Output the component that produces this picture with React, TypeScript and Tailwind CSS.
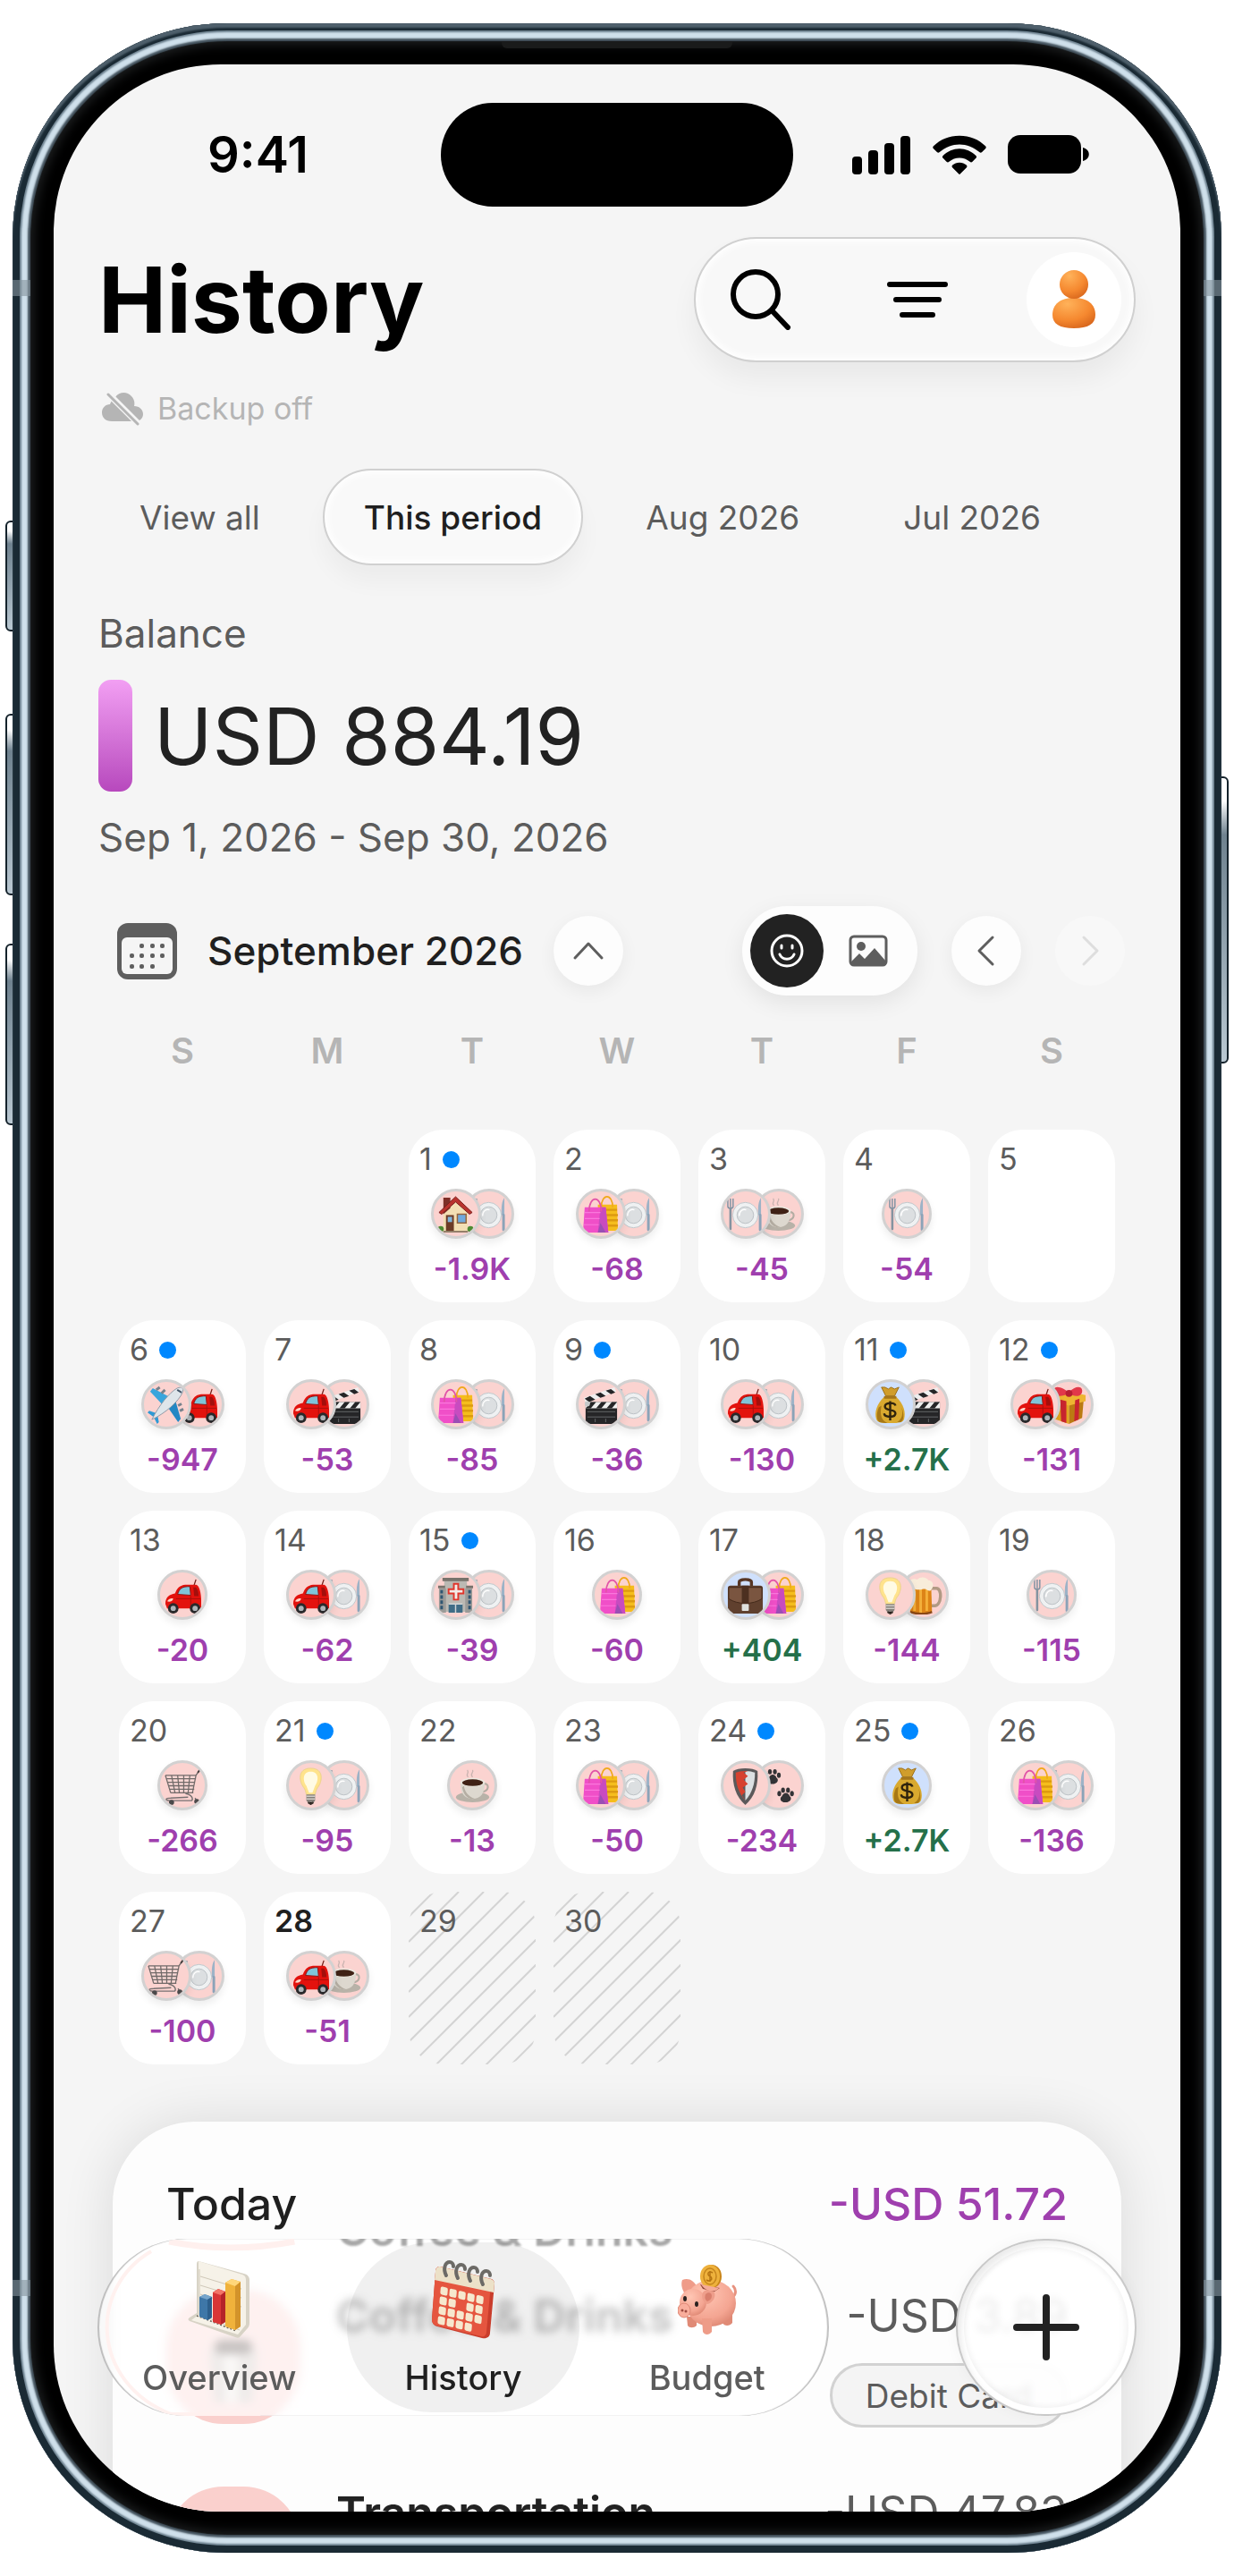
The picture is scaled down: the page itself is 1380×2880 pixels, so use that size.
import { useState } from "react";
import type { ReactNode } from "react";
import clsx from "clsx";

/* =======================
   Types
======================= */

type Category =
  | "home"
  | "shopping"
  | "food"
  | "coffee"
  | "travel"
  | "car"
  | "movies"
  | "salary"
  | "gift"
  | "health"
  | "work"
  | "utilities"
  | "beer"
  | "groceries"
  | "insurance"
  | "pets";

type Day = {
  day: number;
  amount?: string;
  icons?: Category[];
  marked?: boolean;
  today?: boolean;
  future?: boolean;
};

/* =======================
   Data
======================= */

const PERIODS = ["View all", "This period", "Aug 2026", "Jul 2026"];

const WEEKDAYS = ["S", "M", "T", "W", "T", "F", "S"];

const DAYS: Day[] = [
  { day: 1, amount: "-1.9K", icons: ["home", "food"], marked: true },
  { day: 2, amount: "-68", icons: ["shopping", "food"] },
  { day: 3, amount: "-45", icons: ["food", "coffee"] },
  { day: 4, amount: "-54", icons: ["food"] },
  { day: 5 },
  { day: 6, amount: "-947", icons: ["travel", "car"], marked: true },
  { day: 7, amount: "-53", icons: ["car", "movies"] },
  { day: 8, amount: "-85", icons: ["shopping", "food"] },
  { day: 9, amount: "-36", icons: ["movies", "food"], marked: true },
  { day: 10, amount: "-130", icons: ["car", "food"] },
  { day: 11, amount: "+2.7K", icons: ["salary", "movies"], marked: true },
  { day: 12, amount: "-131", icons: ["car", "gift"], marked: true },
  { day: 13, amount: "-20", icons: ["car"] },
  { day: 14, amount: "-62", icons: ["car", "food"] },
  { day: 15, amount: "-39", icons: ["health", "food"], marked: true },
  { day: 16, amount: "-60", icons: ["shopping"] },
  { day: 17, amount: "+404", icons: ["work", "shopping"] },
  { day: 18, amount: "-144", icons: ["utilities", "beer"] },
  { day: 19, amount: "-115", icons: ["food"] },
  { day: 20, amount: "-266", icons: ["groceries"] },
  { day: 21, amount: "-95", icons: ["utilities", "food"], marked: true },
  { day: 22, amount: "-13", icons: ["coffee"] },
  { day: 23, amount: "-50", icons: ["shopping", "food"] },
  { day: 24, amount: "-234", icons: ["insurance", "pets"], marked: true },
  { day: 25, amount: "+2.7K", icons: ["salary"], marked: true },
  { day: 26, amount: "-136", icons: ["shopping", "food"] },
  { day: 27, amount: "-100", icons: ["groceries", "food"] },
  { day: 28, amount: "-51", icons: ["car", "coffee"], today: true },
  { day: 29, future: true },
  { day: 30, future: true },
];

const INCOME: Category[] = ["salary", "work"];

/* =======================
   Category drawings (44 x 44)
======================= */

const paw = (
  <g fill="#333336">
    <path d="M0 8C-6 8-7 3-4 1-2-4 3-4 5 1 8 3 6 8 0 8Z" />
    <ellipse cx="-7" cy="-2" rx="2.200" ry="3" />
    <ellipse cx="-2.700" cy="-6" rx="2.200" ry="3" />
    <ellipse cx="3" cy="-6" rx="2.200" ry="3" />
    <ellipse cx="7.500" cy="-2" rx="2.200" ry="3" />
  </g>
);

const ART: Record<Category, ReactNode> = {
  home: (
    <>
      <path d="M8 20 22 7l14 13v22H8Z" fill="#f3dfb4" />
      <path d="M8 3h8v12l-8 7Z" fill="#7d2f28" />
      <path d="M3 20 22 2l19 18-3 2L22 8 6 22Z" fill="#b9332e" stroke="#7a1f1c" strokeWidth="1" />
      <rect x="11" y="23" width="9" height="19" fill="#6d3b26" />
      <rect x="13" y="25" width="5" height="6" fill="#7fb5dc" />
      <rect x="24" y="22" width="10" height="10" fill="#6fa9dd" stroke="#93633d" strokeWidth="1.500" />
      <path d="M8 42h28" stroke="#94806a" strokeWidth="2" />
      <circle cx="5" cy="39" r="3.500" fill="#4d8b32" />
      <circle cx="39" cy="39" r="3.500" fill="#4d8b32" />
    </>
  ),
  shopping: (
    <>
      <path d="M19 11h22l1 30H20Z" fill="#f5bd1c" />
      <path d="M22 17h19M22 23h20M22 29h20M22 35h20" stroke="#dd9a10" strokeWidth="2.500" />
      <path d="M23 14c0-16 13-16 13 0" fill="none" stroke="#f0a91c" strokeWidth="1.800" />
      <path d="M4 14h24l3 29H2Z" fill="#f04fc8" />
      <path d="M22 14h6l3 29H19Z" fill="#c84bc0" />
      <path d="m22 32 6 11h-9Z" fill="#9a4fb4" />
      <path d="M9 19c0-19 14-19 14 0" fill="none" stroke="#e254a8" strokeWidth="1.800" />
      <path d="M4 20h18M4 27h17M3 34h17" stroke="#f977dc" strokeWidth="1.200" />
    </>
  ),
  food: (
    <>
      <circle cx="22" cy="23" r="14.500" fill="#eff1f2" stroke="#c0c7cb" strokeWidth="1" />
      <circle cx="22" cy="23" r="9.500" fill="#dcdfe1" stroke="#bbc1c5" strokeWidth="1" />
      <path d="M15 24c0-6 4-8 8-7" fill="none" stroke="#fff" strokeWidth="1.500" />
      <path d="M2 4v9c0 3 6 3 6 0V4M5 4v10" fill="none" stroke="#7f92a3" strokeWidth="1.500" />
      <path d="M5 15v24" stroke="#8493a0" strokeWidth="2.600" strokeLinecap="round" />
      <path d="M40 3c-3 4-4 12-3 20l3 1Z" fill="#9db3c7" />
      <path d="M39 23v17" stroke="#8ba3b8" strokeWidth="3" strokeLinecap="round" />
    </>
  ),
  coffee: (
    <>
      <ellipse cx="22" cy="35" rx="19" ry="6" fill="#b8b2a8" />
      <path d="M33 20c9-3 9 10-2 9" fill="none" stroke="#b4ada3" strokeWidth="2.200" />
      <path d="M8 18h28c0 12-4 19-14 19S8 30 8 18Z" fill="#ddd8cf" />
      <path d="M10 24c2 8 5 12 11 13h4C16 34 13 28 12 22Z" fill="#b5aea3" />
      <ellipse cx="22" cy="18" rx="14" ry="5" fill="#ece8e0" />
      <ellipse cx="22" cy="18.500" rx="12" ry="3.800" fill="#3f2115" />
      <path d="M17 12c-4-3 2-4-1-8m6 8c-4-4 2-5 0-8" fill="none" stroke="#c9b3b0" strokeWidth="1.300" />
    </>
  ),
  travel: (
    <>
      <path d="M21 25 4 7l3-4 23 12Z" fill="#39a5dc" />
      <path d="m23 23 13 19 3-4-7-24Z" fill="#2387c4" />
      <path d="m12 32-9-3-2 2 7 5 4 8 2-2Z" fill="#2d9ad5" />
      <path d="M11 5l4-3M17 9l4-4M38 29l4-2M36 23l4-2" stroke="#77828d" strokeWidth="3" />
      <path d="M6 39C14 23 26 8 35 3c5-2 8 0 6 5-4 10-20 24-35 31Z" fill="#dfe5ea" stroke="#8e9ba7" strokeWidth="1" />
      <path d="m35 5 5 3" stroke="#43566a" strokeWidth="2" />
    </>
  ),
  car: (
    <>
      <path d="m34 13 3-9" stroke="#762019" strokeWidth="1.300" />
      <path d="M2 32c0-8 5-11 11-12 3-8 7-10 14-10h10c4 0 6 11 6 18v9H4Z" fill="#e3120d" />
      <path d="M16 21c2-7 5-9 14-9l1 10Z" fill="#7fc4d8" stroke="#8c1512" strokeWidth="1" />
      <path d="M34 13h3c2 2 3 6 3 10h-5Z" fill="#a30f0c" />
      <path d="M14 26h28M31 23v12" stroke="#a90f0c" strokeWidth="1" />
      <path d="M4 29c2-3 5-4 7-3-1 3-4 4-7 3Z" fill="#ffd6c8" />
      <circle cx="11" cy="37" r="6" fill="#29292b" />
      <circle cx="11" cy="37" r="3" fill="#aeb4b8" />
      <circle cx="36" cy="37" r="6" fill="#29292b" />
      <circle cx="36" cy="37" r="3" fill="#aeb4b8" />
    </>
  ),
  movies: (
    <>
      <path d="M5 19h36v22c0 2-1 3-3 3H8c-2 0-3-1-3-3Z" fill="#252527" />
      <path d="M7 30h32M7 36h32M16 38v4M28 38v4" stroke="#66686a" strokeWidth="1" />
      <path d="M5 26V19h36v7Z" fill="#efefef" />
      <path d="m5 26 6-7h6l-6 7Zm12 0 6-7h6l-6 7Zm12 0 6-7h6l-6 7Z" fill="#252527" />
      <path d="M3 14 38 2l2 5L5 20Z" fill="#efefef" />
      <path d="m4 15 6-3 6 4-7 3Zm12-5 6-2 6 4-6 2Zm12-4 6-2 5 4-5 2Z" fill="#252527" />
      <circle cx="7" cy="21" r="3" fill="#c5c8ca" />
    </>
  ),
  salary: (
    <>
      <path d="M15 13C6 22 4 31 6 38c1 4 5 5 16 5s15-1 16-5c2-7 0-16-9-25Z" fill="#d9a92f" />
      <path d="M9 25c-3 7-3 15 1 17 3 1 6 1 9 1-7-3-9-9-7-20Zm26 0c3 7 3 15-1 17h-4c6-4 7-10 5-17Z" fill="#a77816" />
      <path d="M12 2 17 12h10l5-10-5 2-4-2-3 2-4-2Z" fill="#d09d2c" stroke="#9d701a" strokeWidth="1" />
      <path d="M15 12h14v3H15Z" fill="#a5761b" />
      <path d="M28 23c-1-4-12-4-12 1 0 6 12 2 12 8 0 5-12 5-13 0M22 18v22" fill="none" stroke="#30240d" strokeWidth="2.500" />
    </>
  ),
  gift: (
    <>
      <path d="m4 15 19 5v24L6 38Z" fill="#e2a51f" />
      <path d="m23 20 17-6-2 23-15 7Z" fill="#bb7a12" />
      <path d="M2 12 22 7l20 4v7l-19 5L2 18Z" fill="#eeb531" />
      <path d="m13 16 7 2v25l-6-2Zm17 1 5-2-1 24-5 2Z" fill="#c9252f" />
      <path d="M23 9C13 14 5 13 6 4c2-5 11-1 17 4C29 1 37 0 38 5c1 8-8 9-15 4Z" fill="#e2394a" />
      <circle cx="23" cy="9" r="4" fill="#b71f31" />
    </>
  ),
  health: (
    <>
      <path d="M9 3h26v38H9Z" fill="#bbb9b3" />
      <path d="M7 2h30v4H7ZM2 11h8v3H2Zm32 0h8v3h-8Z" fill="#77736c" />
      <path d="M3 14h8v28H3Zm30 0h8v28h-8Z" fill="#9b9b98" />
      <path d="M6 16v23M38 16v23" stroke="#2f5672" strokeWidth="3" strokeDasharray="4 2" />
      <path d="M20 9h5v6h6v5h-6v7h-5v-7h-6v-5h6Z" fill="#f3ece9" stroke="#e0362c" strokeWidth="2" />
      <path d="M14 32h16v10H14Z" fill="#3f6c86" />
      <path d="M14 32h16M22 32v10" stroke="#d1d5d6" strokeWidth="1.500" />
    </>
  ),
  work: (
    <>
      <path d="M15 13V7c0-4 14-4 14 0v6" fill="none" stroke="#573625" strokeWidth="3.500" />
      <rect x="2" y="11" width="40" height="32" rx="3" fill="#60402e" />
      <path d="M3 13h38v13c-10 7-28 7-38 0Z" fill="#7a5540" stroke="#44291b" strokeWidth="1" />
      <path d="M18 11h8v23h-8Z" fill="#4c2f20" />
      <rect x="18" y="32" width="8" height="8" rx="1" fill="#dfe0dd" />
    </>
  ),
  utilities: (
    <>
      <path d="M22 2c16 0 13 16 8 22-2 3-2 4-3 8H17c-1-4-1-5-3-8C9 18 6 2 22 2Z" fill="#ffe38c" stroke="#ecd28b" strokeWidth="1" />
      <path d="M22 6c10 0 9 11 5 16l-3 8h-4l-3-8c-4-5-5-16 5-16Z" fill="#fffbe4" />
      <path d="M17 32h10v7l-3 4h-4l-3-4Z" fill="#85807a" />
      <path d="M17 34h10M17 37h10" stroke="#d0ccc6" strokeWidth="1.500" />
      <path d="m19 41 3 2 3-2" stroke="#39302a" strokeWidth="2" />
    </>
  ),
  beer: (
    <>
      <path d="M29 14h8c7 0 6 20-2 20h-6" fill="none" stroke="#b19a84" strokeWidth="3.500" />
      <path d="M8 10h23l1 31c-6 3-18 3-25 0Z" fill="#dd8417" />
      <path d="M12 15v25M19 15v27M26 15v25" stroke="#f4b03a" strokeWidth="3" />
      <path d="M7 41c7 3 19 3 25 0" fill="none" stroke="#8a4815" strokeWidth="2.500" />
      <path d="M5 14C2 4 11 2 15 4c4-4 11-3 13 1 7 0 6 9 2 12-4 0-4-3-9-2-5 2-9-1-16-1Z" fill="#f8edda" />
    </>
  ),
  groceries: (
    <>
      <path d="M2 10h35l-3 19H8Z" fill="#f6dbd8" fillOpacity="0.500" />
      <path
        d="M2 10h35M3 14h34M4 18h32M5 22h30M6 26h29M8 30h26M2 10l6 20M9 10l4 20M16 10l2 20M23 10v20M30 10l-2 20M42 3l-5 7-4 20"
        fill="none"
        stroke="#716a69"
        strokeWidth="1.300"
      />
      <path d="M25 31c8 1 9 7 7 8H7c-6 0-5-3 1-3l20-1M10 39l-1 3M36 36l2 4" fill="none" stroke="#777171" strokeWidth="1.500" />
      <circle cx="9" cy="41" r="3" fill="#4b4a4b" />
      <circle cx="38" cy="40" r="3" fill="#4b4a4b" />
      <path d="m39 7 4-5" stroke="#423c3c" strokeWidth="2" />
    </>
  ),
  insurance: (
    <>
      <path d="M22 2c6 0 11 1 14 3 1 16-3 29-14 39C11 34 7 21 8 5c3-2 8-3 14-3Z" fill="#5b595a" />
      <path d="M22 5c5 0 8 1 11 2 0 13-3 23-11 32Z" fill="#dce0e2" />
      <path d="M22 5c-5 0-8 1-11 2 0 13 3 23 11 32l-4-6 4-4-3-5 6-4-5-5 5-4-5-4 5-2Z" fill="#d6412f" />
    </>
  ),
  pets: (
    <>
      <g transform="translate(15 12)">{paw}</g>
      <g transform="translate(30 33)">{paw}</g>
    </>
  ),
};

/* =======================
   Small drawings
======================= */

function SignalIcon() {
  return (
    <svg viewBox="0 0 66 44" className="h-11 w-[66px]">
      <rect x="0" y="24" width="11" height="20" rx="4" />
      <rect x="18" y="17" width="11" height="27" rx="4" />
      <rect x="36" y="9" width="11" height="35" rx="4" />
      <rect x="54" y="1" width="11" height="43" rx="4" />
    </svg>
  );
}

function WifiIcon() {
  return (
    <svg viewBox="0 0 62 44" className="h-11 w-[60px]">
      <path d="M31 0c12 0 22 4 30 12 1 1 1 2 0 3l-4 4c-1 1-2 1-3 0-13-12-33-12-46 0-1 1-2 1-3 0l-4-4c-1-1-1-2 0-3C9 4 19 0 31 0Z" />
      <path d="M31 15c7 0 14 3 19 8 1 1 1 2 0 3l-4 4c-1 1-2 1-3 0-7-6-17-6-24 0-1 1-2 1-3 0l-4-4c-1-1-1-2 0-3 5-5 12-8 19-8Z" />
      <path d="M31 31c3 0 6 1 8 3 1 1 1 2 0 3l-7 7c-1 1-1 1-2 0l-7-7c-1-1-1-2 0-3 2-2 5-3 8-3Z" />
    </svg>
  );
}

function BatteryIcon() {
  return (
    <svg viewBox="0 0 92 44" className="h-11 w-[92px]">
      <rect x="0" y="0" width="82" height="43" rx="14" />
      <path d="M84 14c9 2 9 13 0 15Z" />
    </svg>
  );
}

function CloudOffIcon() {
  return (
    <svg viewBox="0 0 46 38" className="h-[38px] w-[46px]" fill="#b5b5b5">
      <path d="M15 6c4-6 13-7 18-1 3 3 4 7 3 11 6 0 10 4 10 9 0 4-3 8-8 8H11C4 33 0 29 0 23c0-5 4-9 9-9 1-3 3-6 6-8Z" />
      <path d="M6 1 42 37" stroke="#f5f5f5" strokeWidth="7" />
      <path d="M7 3 40 36" stroke="#b5b5b5" strokeWidth="3" strokeLinecap="round" />
    </svg>
  );
}

function CalendarIcon() {
  return (
    <svg viewBox="0 0 67 63" className="h-[63px] w-[67px]">
      <rect x="0" y="0" width="67" height="63" rx="12" fill="#5e5e5e" />
      <rect x="5" y="16" width="57" height="41" rx="6" fill="#f5f5f5" />
      <g fill="#5e5e5e">
        {[25, 36, 48].map((y, row) =>
          [16, 27, 39, 50].map((x, col) =>
            (row === 0 && col === 0) || (row === 2 && col === 3) ? null : (
              <rect key={`${x}-${y}`} x={x - 2} y={y - 2} width="5" height="5" rx="2" />
            )
          )
        )}
      </g>
    </svg>
  );
}

function Chevron({ dir }: { dir: "up" | "left" | "right" }) {
  const d = {
    up: "M5 28 20 12l15 16",
    left: "M27 5 12 20l15 15",
    right: "m13 5 15 15-15 15",
  }[dir];
  return (
    <svg viewBox="0 0 40 40" className="h-10 w-10" fill="none" stroke="currentColor">
      <path d={d} strokeWidth="3" strokeLinecap="round" strokeLinejoin="round" />
    </svg>
  );
}

function PersonIcon() {
  return (
    <svg viewBox="0 0 50 66" className="h-[66px] w-[50px]">
      <defs>
        <radialGradient id="skin" cx="35%" cy="20%" r="90%">
          <stop offset="0" stopColor="#ffb25a" />
          <stop offset="0.600" stopColor="#f5882f" />
          <stop offset="1" stopColor="#d4621a" />
        </radialGradient>
      </defs>
      <path d="M25 31c15 0 24 7 24 19 0 10-8 15-24 15S1 60 1 50c0-12 9-19 24-19Z" fill="url(#skin)" />
      <circle cx="25" cy="16" r="16" fill="url(#skin)" />
    </svg>
  );
}

function OverviewArt() {
  return (
    <svg viewBox="0 0 70 88" className="h-[88px] w-[70px]">
      <path d="M12 1 63 15c4 1 6 4 6 7v48c0 3-1 5-3 7l-8 9c-1 1-3 1-5 0L2 68c-2-1-2-3 0-4l8-5V4c0-2 1-3 2-3Z" fill="#d8d3c6" />
      <path d="m12 1 49 15c3 1 4 3 4 6v50l-9 11-52-16 8-6Z" fill="#f6f2e8" />
      <path d="M13 10v51l45 17M14 18l46 14M14 28l46 14M14 38l46 14" fill="none" stroke="#cfc8b8" strokeWidth="1" />
      <path d="m10 62 44 17" stroke="#6e685c" strokeWidth="1.500" strokeDasharray="2 2" />
      <path d="m13 41 6-3 8 3v23l-5 3-9-4Z" fill="#3e77a8" />
      <path d="m13 41 6-3 8 3-5 3Z" fill="#76a5cb" />
      <path d="M22 44v23l5-3V41Z" fill="#2d5f8c" />
      <path d="m28 36 6-4 8 3v34l-5 3-9-3Z" fill="#d93636" />
      <path d="m28 36 6-4 8 3-5 4Z" fill="#f27567" />
      <path d="M37 39v33l5-3V35Z" fill="#b52329" />
      <path d="m42 25 7-4 10 3v50l-6 4-11-4Z" fill="#f0b23b" />
      <path d="m42 25 7-4 10 3-6 5Z" fill="#ffd67a" />
      <path d="M53 29v49l6-4V24Z" fill="#d3932a" />
    </svg>
  );
}

function HistoryArt() {
  return (
    <svg viewBox="0 0 72 88" className="h-[88px] w-[72px]">
      <path d="M10 7 68 21c2 1 3 3 3 5l-5 55c0 5-4 7-9 6L7 74c-4-1-6-4-6-8L5 13c0-4 2-6 5-6Z" fill="#c93d2c" />
      <path d="M10 7 65 21c2 1 3 3 2 5l-5 54c0 4-3 6-6 5L6 73c-3-1-5-3-5-7L5 13c0-4 2-6 5-6Z" fill="#e5553f" />
      <path d="M10 7 67 21c3 1 4 3 4 5l-1 10L4 22l1-9c0-4 2-6 5-6Z" fill="#ece1c8" />
      <g fill="#f6e8ce" transform="matrix(1 .24 -.09 1 11 29)">
        {[0, 1, 2, 3].map((row) =>
          [0, 1, 2, 3, 4].map((col) =>
            (row === 1 && col === 2) || (row === 3 && col === 4) ? null : (
              <rect key={`${row}-${col}`} x={col * 10} y={row * 11} width="8" height="9" rx="2" />
            )
          )
        )}
      </g>
      <path d="M17 17c-4-8-1-15 4-15 3 0 4 3 4 5M30 20c-4-8-1-15 4-15 3 0 4 3 4 5M44 23c-4-8-1-15 4-15 3 0 4 3 4 5M58 27c-4-8-1-15 4-15 3 0 4 3 4 5" fill="none" stroke="#6c6a66" strokeWidth="4" strokeLinecap="round" />
    </svg>
  );
}

function BudgetArt() {
  return (
    <svg viewBox="0 0 66 78" className="h-[78px] w-[66px]">
      <defs>
        <radialGradient id="pig" cx="40%" cy="30%" r="75%">
          <stop offset="0" stopColor="#ffc6b4" />
          <stop offset="0.700" stopColor="#f4a592" />
          <stop offset="1" stopColor="#dd8672" />
        </radialGradient>
      </defs>
      <path d="M61 36c5-3 4-9 1-12" fill="none" stroke="#e7927f" strokeWidth="3" strokeLinecap="round" />
      <path d="M10 58h11v10c-3 3-8 3-10 0Zm39-2h12v9c-3 4-9 4-11 0Z" fill="#e08a76" />
      <path d="M5 17c7-3 13 1 16 7L9 34C5 29 3 22 5 17Z" fill="#ef9c89" />
      <ellipse cx="37" cy="43" rx="28" ry="26" fill="url(#pig)" />
      <path d="M27 60h11v15c-3 4-8 4-10 0Z" fill="#ee9c88" />
      <circle cx="17" cy="42" r="15" fill="url(#pig)" />
      <path d="M28 31c5-6 12-4 13 0 2 6-3 12-8 13-5-2-7-8-5-13Z" fill="#ee9e8b" />
      <path d="M31 33c3-3 7-2 7 2 0 3-2 5-5 6-3-2-3-5-2-8Z" fill="#d97f6d" />
      <ellipse cx="7" cy="51" rx="7" ry="8" fill="#f9ae9c" stroke="#dd8876" strokeWidth="1" />
      <circle cx="5" cy="51" r="1.500" fill="#9c4a40" />
      <circle cx="9" cy="52" r="1.500" fill="#9c4a40" />
      <ellipse cx="8" cy="38" rx="2" ry="3" fill="#2b2220" />
      <ellipse cx="21" cy="44" rx="2" ry="3" fill="#2b2220" />
      <path d="m25 22 22 4-6 4-13-3Z" fill="#8e4336" />
      <ellipse cx="38" cy="13" rx="11" ry="13" fill="#c98518" />
      <ellipse cx="36" cy="13" rx="11" ry="13" fill="#eeb13c" />
      <ellipse cx="36" cy="13" rx="7" ry="9" fill="none" stroke="#c5851c" strokeWidth="1.500" />
      <path d="M39 9c-5-3-7 2-3 4s1 7-4 4M36 7v12" fill="none" stroke="#b67412" strokeWidth="1.500" />
      <path d="m26 22 20 4c-5 6-15 4-20-4Z" fill="#f6ab98" />
    </svg>
  );
}

function CupArt() {
  return (
    <svg viewBox="0 0 70 110" className="h-[110px] w-[70px]">
      <path d="M8 46h54l-6 60H14Z" fill="#c9bfba" />
      <path d="M24 46h16v60H26Z" fill="#eee8e4" />
      <rect x="14" y="36" width="42" height="16" rx="8" fill="#4a3b37" />
    </svg>
  );
}

/* =======================
   Calendar cells
======================= */

function CategoryBadge({ category, first }: { category: Category; first: boolean }) {
  return (
    <span
      className={clsx(
        "relative flex h-14 w-14 shrink-0 items-center justify-center overflow-hidden rounded-full border-3 border-[#d2d1d1] shadow-[0_5px_8px_rgba(0,0,0,0.07)]",
        INCOME.includes(category) ? "bg-[#cfe0fc]" : "bg-[#fbd3d0]",
        first ? "z-10" : "-ml-[19px]"
      )}
    >
      <svg viewBox="0 0 44 44" className="h-[43px] w-[43px] shrink-0">
        {ART[category]}
      </svg>
    </span>
  );
}

function DayCell({ item }: { item: Day }) {
  const icons = item.icons ?? [];

  return (
    <button
      type="button"
      className={clsx(
        "relative flex h-[193px] flex-col overflow-hidden rounded-[38px]",
        !item.future && "bg-white",
        item.day === 1 && "col-start-3"
      )}
    >
      {item.future && (
        <svg className="absolute inset-0 h-full w-full" stroke="#d3d3d3" strokeWidth="2">
          {Array.from({ length: 12 }, (_, i) => (i + 1) * 28).map((n) => (
            <line key={n} x1={n} y1="0" x2="0" y2={n} />
          ))}
        </svg>
      )}

      <span className="relative flex h-[66px] w-full items-center gap-3 pl-3">
        <span
          className={clsx(
            "text-[34px] leading-10",
            item.today ? "font-semibold text-[#1f1f1f]" : "text-[#5c5c5c]"
          )}
        >
          {item.day}
        </span>
        {item.marked && <span className="h-[19px] w-[19px] rounded-full bg-[#0088ff]" />}
      </span>

      {icons.length > 0 && (
        <span className="flex w-full justify-center">
          {icons.map((c, i) => (
            <CategoryBadge key={c} category={c} first={i === 0} />
          ))}
        </span>
      )}

      {item.amount && (
        <span
          className={clsx(
            "mt-[14px] w-full text-center text-[34px] leading-10 font-semibold",
            item.amount.startsWith("+") ? "text-[#25704a]" : "text-[#9f3fae]"
          )}
        >
          {item.amount}
        </span>
      )}
    </button>
  );
}

/* =======================
   Sections
======================= */

function StatusBar() {
  return (
    <div className="flex h-[193px] items-start justify-between pt-[43px] pr-[51px] pl-[122px] text-black">
      <div className="flex h-[116px] w-[194px] items-center text-[56px] leading-none font-semibold">9:41</div>
      <div className="h-[116px] w-[394px] rounded-full bg-black" />
      <div className="flex h-[116px] items-center gap-6">
        <SignalIcon />
        <WifiIcon />
        <BatteryIcon />
      </div>
    </div>
  );
}

function Header() {
  return (
    <header>
      <div className="flex h-[140px] items-center justify-between">
        <h1 className="text-[102px] leading-none font-bold text-black">History</h1>

        <div className="flex h-full w-[494px] items-center justify-between rounded-full border-2 border-[#d0d0d0] bg-[#f8f8f8] pr-[14px] pl-5 shadow-[inset_0_0_8px_3px_#fff,0_18px_30px_rgba(0,0,0,0.05)]">
          <button type="button" aria-label="Search" className="flex h-[106px] w-[106px] items-center justify-center">
            <svg viewBox="0 0 68 68" className="h-[68px] w-[68px]" fill="none" stroke="#000" strokeWidth="6" strokeLinecap="round">
              <circle cx="28" cy="28" r="25" />
              <path d="m46 46 18 19" />
            </svg>
          </button>
          <button type="button" aria-label="Filter">
            <svg viewBox="0 0 70 42" className="h-[42px] w-[70px]" stroke="#000" strokeWidth="6" strokeLinecap="round">
              <path d="M4 4h62M11 21h48M18 38h34" />
            </svg>
          </button>
          <button type="button" aria-label="Profile" className="flex h-[106px] w-[106px] items-center justify-center rounded-full bg-white">
            <PersonIcon />
          </button>
        </div>
      </div>

      <div className="mt-[30px] flex h-11 items-center gap-4 pl-1 text-[34px] leading-none text-[#b5b5b5]">
        <CloudOffIcon />
        Backup off
      </div>
    </header>
  );
}

function Balance() {
  return (
    <section className="mt-12 text-[44px] leading-[56px] text-[#5c5c5c]">
      <h2>Balance</h2>
      <div className="mt-6 flex items-center gap-6">
        <div className="h-[125px] w-[38px] rounded-[14px] bg-linear-to-b from-[#f29ff3] to-[#b748bd]" />
        <div className="text-[88px] leading-none text-[#222]">USD 884.19</div>
      </div>
      <p className="mt-[23px]">Sep 1, 2026 - Sep 30, 2026</p>
    </section>
  );
}

function CalendarHeader({ mode, onMode }: { mode: string; onMode: (m: string) => void }) {
  const round = "flex h-[78px] w-[78px] items-center justify-center rounded-full";

  return (
    <div className="mt-[49px] flex h-[100px] items-center justify-between pr-3 pl-[21px] text-[#5e5e5e]">
      <div className="flex items-center gap-[34px]">
        <CalendarIcon />
        <h3 className="text-[44px] leading-none font-medium text-[#1f1f1f]">September 2026</h3>
        <button type="button" aria-label="Collapse" className={clsx(round, "bg-[#fdfdfd] shadow-[0_6px_20px_rgba(0,0,0,0.06)]")}>
          <Chevron dir="up" />
        </button>
      </div>

      <div className="flex items-center gap-[38px]">
        <div className="flex h-[100px] w-[196px] items-center rounded-full bg-[#fdfdfd] p-[9px] shadow-[0_8px_26px_rgba(0,0,0,0.08)]">
          <button
            type="button"
            aria-label="Emoji view"
            aria-pressed={mode === "emoji"}
            onClick={() => onMode("emoji")}
            className="flex h-[82px] w-[82px] items-center justify-center rounded-full bg-[#222]"
          >
            <svg viewBox="0 0 40 40" className="h-10 w-10" fill="none" stroke="#fff" strokeWidth="3" strokeLinecap="round">
              <circle cx="20" cy="20" r="17" />
              <path d="M14 14v3M26 14v3M12 24c3 7 13 7 16 0" />
            </svg>
          </button>
          <button
            type="button"
            aria-label="Photo view"
            aria-pressed={mode === "photo"}
            onClick={() => onMode("photo")}
            className="flex flex-1 items-center justify-center pl-1"
          >
            <svg viewBox="0 0 44 36" className="h-9 w-11" fill="#5e5e5e">
              <rect x="2" y="2" width="40" height="32" rx="4" fill="none" stroke="#5e5e5e" strokeWidth="3" />
              <circle cx="14" cy="13" r="5" />
              <path d="m3 30 9-9 6 6 11-12 13 15v4H3Z" />
            </svg>
          </button>
        </div>
        <button type="button" aria-label="Previous month" className={clsx(round, "bg-[#fdfdfd] shadow-[0_6px_20px_rgba(0,0,0,0.06)]")}>
          <Chevron dir="left" />
        </button>
        <button type="button" aria-label="Next month" disabled className={clsx(round, "bg-[#f8f8f8] text-[#dedede]")}>
          <Chevron dir="right" />
        </button>
      </div>
    </div>
  );
}

function Transaction({ title, amount, account, art }: { title: string; amount: string; account?: string; art?: ReactNode }) {
  return (
    <li className="flex h-[150px] justify-between">
      <div className="flex">
        <span className="flex w-[150px] items-center justify-center rounded-[64px] bg-[#fad0cd]">{art}</span>
        <span className="ml-10 text-[50px] leading-[58px] font-semibold text-[#222]">{title}</span>
      </div>
      <div className="flex flex-col items-end text-[#5c5c5c]">
        <span className="text-[50px] leading-[58px]">{amount}</span>
        {account && (
          <span className="mt-6 flex h-[72px] shrink-0 items-center rounded-full border-3 border-[#d2d2d2] bg-[#f4f4f4] px-[37px] text-[37px] leading-none whitespace-nowrap">
            {account}
          </span>
        )}
      </div>
    </li>
  );
}

function TodaySheet() {
  return (
    <section className="mx-4 mt-16 h-[640px] rounded-t-[92px] bg-[#fdfdfd] px-[60px] pt-[60px] shadow-[0_0_60px_rgba(0,0,0,0.11)]">
      <div className="flex justify-between text-[50px] leading-[64px] font-medium">
        <h3 className="text-[#1f1f1f]">Today</h3>
        <span className="text-[#9f3fae]">-USD 51.72</span>
      </div>
      <ul className="mt-16 flex flex-col gap-[70px]">
        <Transaction title="Coffee & Drinks" amount="-USD 3.89" account="Debit Card" art={<CupArt />} />
        <Transaction title="Transportation" amount="-USD 47.83" />
      </ul>
    </section>
  );
}

function TabBar() {
  const tabs = [
    { label: "Overview", art: <OverviewArt /> },
    { label: "History", art: <HistoryArt />, active: true },
    { label: "Budget", art: <BudgetArt /> },
  ];

  return (
    <div className="absolute inset-x-[49px] bottom-[107px] flex h-[198px] gap-[142px]">
      <nav className="relative flex flex-1 overflow-hidden rounded-full bg-white/70 shadow-[inset_2px_0_1px_rgba(0,0,0,0.25),inset_-2px_0_1px_rgba(0,0,0,0.25)] backdrop-blur-[5px]">
        {/* glass refraction along the rim */}
        <svg viewBox="0 0 817 198" preserveAspectRatio="none" className="absolute inset-0 h-full w-full" fill="none">
          <path d="M80 3c44 9 94 9 140 0" stroke="#fff0ee" strokeWidth="7" />
          <path d="M60 14C-10 55-8 160 82 196h100" stroke="#fff1ef" strokeWidth="4" />
        </svg>
        <span aria-hidden="true" className="absolute -top-[35px] left-[267px] text-[50px] leading-[50px] font-semibold whitespace-nowrap text-[#a8a8a8] blur-[1px]">
          Coffee & Drinks
        </span>
        {tabs.map((tab) => (
          <a
            key={tab.label}
            href="#"
            aria-current={tab.active ? "page" : undefined}
            className={clsx(
              "relative mx-[6px] my-1 flex flex-1 flex-col items-center rounded-full pt-5 text-[38px] leading-[44px] font-medium",
              tab.active ? "bg-black/6 text-[#1f1f1f]" : "text-[#5c5c5c]"
            )}
          >
            <span className="flex h-[88px] items-center">{tab.art}</span>
            <span className="mt-[21px]">{tab.label}</span>
          </a>
        ))}
      </nav>

      <button
        type="button"
        aria-label="Add transaction"
        className="flex w-[202px] items-center justify-center rounded-full border-2 border-[#c9c9c9] bg-white/88 shadow-[inset_6px_6px_6px_-2px_rgba(0,0,0,0.08),inset_0_0_0_7px_#fff,inset_0_0_6px_9px_rgba(0,0,0,0.05),0_0_16px_rgba(0,0,0,0.04)] backdrop-blur-[4px]"
      >
        <svg viewBox="0 0 74 74" className="h-[74px] w-[74px]" stroke="#222" strokeWidth="8" strokeLinecap="round">
          <path d="M37 4v66M4 37h66" />
        </svg>
      </button>
    </div>
  );
}

/* =======================
   Phone body
======================= */

function SideButton({ className }: { className: string }) {
  return (
    <span
      className={clsx(
        "absolute w-[10px] border-2 border-[#14222b] bg-linear-to-b from-white from-8% via-[#6f828f] via-20% to-[#b9c8d2]",
        className
      )}
    />
  );
}

function Phone({ children }: { children: ReactNode }) {
  return (
    <div className="relative h-full w-full">
      <SideButton className="top-[556px] -left-2 h-[124px] rounded-l-md" />
      <SideButton className="top-[772px] -left-2 h-[203px] rounded-l-md" />
      <SideButton className="top-[1029px] -left-2 h-[203px] rounded-l-md" />
      <SideButton className="top-[842px] -right-2 h-[321px] rounded-r-md" />

      <div className="relative h-full w-full overflow-hidden rounded-[240px] bg-black p-[46px] shadow-[inset_0_5px_2px_#4f606c,inset_0_0_0_8px_#1a2a34,inset_0_0_2px_10px_#6b7f8d,inset_0_0_2px_17px_#cfe0eb,inset_0_0_1px_20px_#44535e,inset_0_0_12px_24px_#1d1f20]">
        <span className="absolute top-[287px] left-0 h-[18px] w-5 bg-[#83929d]/60" />
        <span className="absolute top-[287px] right-0 h-[18px] w-5 bg-[#83929d]/60" />
        <span className="absolute bottom-[287px] left-0 h-[18px] w-5 bg-[#83929d]/60" />
        <span className="absolute right-0 bottom-[287px] h-[18px] w-5 bg-[#83929d]/60" />
        <span className="absolute top-5 left-1/2 h-2 w-[258px] -translate-x-1/2 rounded-b-md bg-[#1a1b1b]" />

        <div className="relative flex h-full flex-col overflow-hidden rounded-[187px] bg-[#f5f5f5] px-[50px] *:shrink-0">
          {children}
        </div>
      </div>
    </div>
  );
}

/* =======================
   App
======================= */

export default function App() {
  const [period, setPeriod] = useState("This period");
  const [mode, setMode] = useState("emoji");

  return (
    <div className="h-screen overflow-hidden bg-white px-[14px] py-[26px] font-['Inter',sans-serif]">
      <Phone>
        <StatusBar />
        <Header />

        <div className="mt-[45px] flex gap-6 text-[37px] leading-none">
          {PERIODS.map((p) => (
            <button
              key={p}
              type="button"
              onClick={() => setPeriod(p)}
              className={clsx(
                "h-[108px] rounded-full border-2 px-11 whitespace-nowrap",
                p === period
                  ? "border-[#d0d0d0] bg-[#f9f9f9] font-medium text-[#1f1f1f] shadow-[inset_0_0_8px_3px_#fff,0_18px_26px_rgba(0,0,0,0.04)]"
                  : "border-transparent text-[#5c5c5c]"
              )}
            >
              {p}
            </button>
          ))}
        </div>

        <Balance />
        <CalendarHeader mode={mode} onMode={setMode} />

        <div className="mt-[37px] px-[23px]">
          <div className="grid grid-cols-7 gap-5 text-center text-[40px] leading-[50px] font-semibold text-[#b5b5b5]">
            {WEEKDAYS.map((w, i) => (
              <span key={i}>{w}</span>
            ))}
          </div>
          <div className="mt-[63px] grid grid-cols-7 gap-5">
            {DAYS.map((d) => (
              <DayCell key={d.day} item={d} />
            ))}
          </div>
        </div>

        <TodaySheet />
        <TabBar />
      </Phone>
    </div>
  );
}
